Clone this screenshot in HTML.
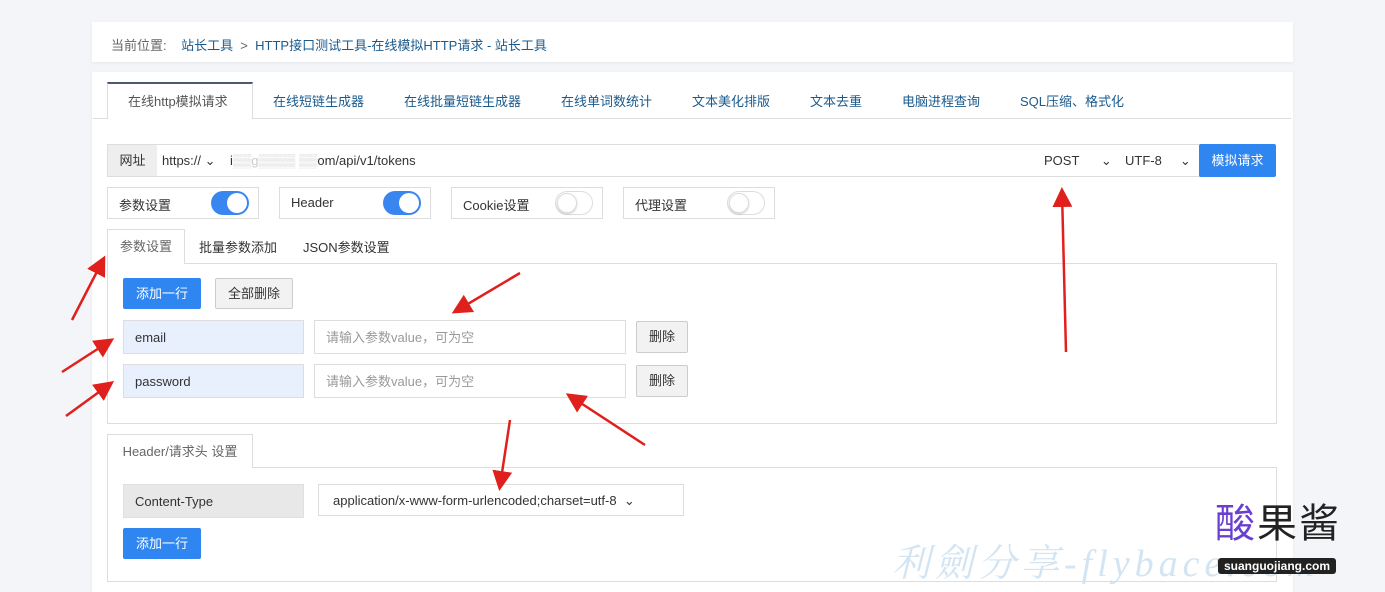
<!DOCTYPE html><html><head><meta charset="utf-8"><style>
*{box-sizing:border-box;margin:0;padding:0}
body{width:1385px;height:579px;overflow:hidden;background:#f3f5f8;font-family:"Liberation Sans","Noto Sans CJK SC",sans-serif;font-size:13px;color:#333;position:relative}
.abs{position:absolute}
.card{position:absolute;background:#fff;box-shadow:0 1px 3px rgba(0,0,0,.06)}
.tab{position:absolute;top:83px;height:37px;line-height:37px;color:#1a5a8c;font-size:13px}
.box{position:absolute;border:1px solid #ddd;background:#fff}
.tog{position:absolute;width:38px;height:24px;border-radius:12px;top:3px;right:9px}
.tog.on{background:#3a86f0}
.tog.off{background:#fff;border:1px solid #ddd}
.tog i{position:absolute;top:2px;width:20px;height:20px;border-radius:50%;background:#fff}
.tog.off i{border:1px solid #ddd;top:1px;left:1px;box-shadow:0 1px 2px rgba(0,0,0,.2)}
.tog.on i{right:2px}
.btnb{position:absolute;background:#2f86f0;color:#fff;text-align:center;border-radius:2px}
.btng{position:absolute;background:#f2f2f2;border:1px solid #ccc;text-align:center;border-radius:2px}
.inp{position:absolute;border:1px solid #ddd;height:34px;line-height:34px;padding-left:11px}
</style></head><body>
<div class="card" style="left:92px;top:22px;width:1201px;height:40px"></div>
<div class="abs" style="left:111px;top:35px;color:#666">当前位置: &nbsp;&nbsp; <span style="color:#1a5a8c">站长工具</span> &nbsp;&gt;&nbsp; <span style="color:#1a5a8c">HTTP接口测试工具-在线模拟HTTP请求 - 站长工具</span></div>
<div class="card" style="left:92px;top:72px;width:1201px;height:520px"></div>
<div class="abs" style="left:93px;top:118px;width:1198px;height:1px;background:#ddd"></div>
<div class="abs" style="left:107px;top:82px;width:146px;height:37px;background:#fff;border:1px solid #ddd;border-top:2px solid #4a5a70;border-bottom:none"></div>
<div class="tab" style="left:128px;color:#555">在线http模拟请求</div>
<div class="tab" style="left:273px">在线短链生成器</div>
<div class="tab" style="left:404px">在线批量短链生成器</div>
<div class="tab" style="left:561px">在线单词数统计</div>
<div class="tab" style="left:692px">文本美化排版</div>
<div class="tab" style="left:810px">文本去重</div>
<div class="tab" style="left:902px">电脑进程查询</div>
<div class="tab" style="left:1020px">SQL压缩、格式化</div>

<div class="box" style="left:107px;top:144px;width:1100px;height:33px"></div>
<div class="abs" style="left:108px;top:145px;width:49px;height:31px;background:#eee;line-height:31px;text-align:center">网址</div>
<div class="abs" style="left:162px;top:153px">https:// ⌄ &nbsp;&nbsp; i<span style="color:#ccc">▒▒g▒▒▒▒ ▒▒</span>om/api/v1/tokens</div>
<div class="abs" style="left:1044px;top:153px">POST &nbsp; &nbsp; &nbsp;⌄</div>
<div class="abs" style="left:1125px;top:153px">UTF-8 &nbsp; &nbsp; ⌄</div>
<div class="btnb" style="left:1199px;top:144px;width:77px;height:33px;line-height:33px">模拟请求</div>

<div class="box" style="left:107px;top:187px;width:152px;height:32px"><span class="abs" style="left:11px;top:7px">参数设置</span><div class="tog on"><i></i></div></div>
<div class="box" style="left:279px;top:187px;width:152px;height:32px"><span class="abs" style="left:11px;top:7px">Header</span><div class="tog on"><i></i></div></div>
<div class="box" style="left:451px;top:187px;width:152px;height:32px"><span class="abs" style="left:11px;top:7px">Cookie设置</span><div class="tog off"><i></i></div></div>
<div class="box" style="left:623px;top:187px;width:152px;height:32px"><span class="abs" style="left:11px;top:7px">代理设置</span><div class="tog off"><i></i></div></div>

<div class="box" style="left:107px;top:263px;width:1170px;height:161px"></div>
<div class="abs" style="left:107px;top:229px;width:78px;height:35px;background:#fff;border:1px solid #ddd;border-bottom:none;line-height:33px;text-align:center;color:#666">参数设置</div>
<div class="abs" style="left:199px;top:237px">批量参数添加</div>
<div class="abs" style="left:303px;top:237px">JSON参数设置</div>
<div class="btnb" style="left:123px;top:278px;width:78px;height:31px;line-height:31px">添加一行</div>
<div class="btng" style="left:215px;top:278px;width:78px;height:31px;line-height:29px">全部删除</div>
<div class="inp" style="left:123px;top:320px;width:181px;background:#e8f0fe">email</div>
<div class="inp" style="left:314px;top:320px;width:312px;color:#999">请输入参数value，可为空</div>
<div class="btng" style="left:636px;top:321px;width:52px;height:32px;line-height:30px">删除</div>
<div class="inp" style="left:123px;top:364px;width:181px;background:#e8f0fe">password</div>
<div class="inp" style="left:314px;top:364px;width:312px;color:#999">请输入参数value，可为空</div>
<div class="btng" style="left:636px;top:365px;width:52px;height:32px;line-height:30px">删除</div>

<div class="box" style="left:107px;top:467px;width:1170px;height:115px"></div>
<div class="abs" style="left:107px;top:434px;width:146px;height:34px;background:#fff;border:1px solid #ddd;border-bottom:none;line-height:34px;text-align:center;color:#666">Header/请求头 设置</div>
<div class="inp" style="left:123px;top:484px;width:181px;background:#e8e8e8;border-color:#e0e0e0">Content-Type</div>
<div class="inp" style="left:318px;top:484px;width:366px;height:32px;line-height:32px;padding-left:14px">application/x-www-form-urlencoded;charset=utf-8 &nbsp;⌄</div>
<div class="btnb" style="left:123px;top:528px;width:78px;height:31px;line-height:31px">添加一行</div>

<div class="abs" style="left:892px;top:532px;font-size:38px;color:#d3e4f2;font-family:'Liberation Serif','Noto Serif CJK SC',serif;font-style:italic;letter-spacing:5px;white-space:nowrap">利劍分享-flybace.com</div>
<div class="abs" style="left:1215px;top:502px;font-size:40px;line-height:44px;letter-spacing:2px;white-space:nowrap"><span style="color:#6a3fd0">酸</span><span style="color:#222">果酱</span></div>
<div class="abs" style="left:1218px;top:558px;width:118px;height:16px;background:#222;color:#fff;font-size:12px;font-weight:bold;line-height:16px;text-align:center;border-radius:3px">suanguojiang.com</div>

<svg class="abs" style="left:0;top:0" width="1385" height="579">
<defs><marker id="a" markerWidth="8" markerHeight="8" refX="6" refY="4" orient="auto"><path d="M0,0 L8,4 L0,8 Z" fill="#e0201c"/></marker></defs>
<g stroke="#e0201c" stroke-width="2.5" marker-end="url(#a)">
<line x1="72" y1="320" x2="103" y2="260"/>
<line x1="62" y1="372" x2="110" y2="341"/>
<line x1="66" y1="416" x2="110" y2="384"/>
<line x1="520" y1="273" x2="456" y2="311"/>
<line x1="1066" y1="352" x2="1062" y2="192"/>
<line x1="645" y1="445" x2="570" y2="396"/>
<line x1="510" y1="420" x2="500" y2="486"/>
</g></svg>
</body></html>
